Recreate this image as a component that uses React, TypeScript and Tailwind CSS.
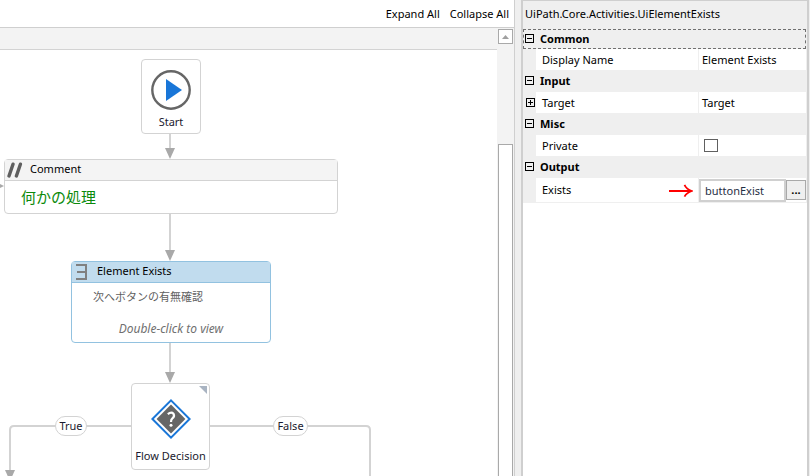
import { useState } from "react";
import type { ReactNode } from "react";

const arrowHeads = [
    { x: 170, y: 98 },
    { x: 170, y: 200 },
    { x: 170, y: 322 },
    { x: 10, y: 420 },
];

function Connectors() {
    return (
        <svg className="absolute left-0 top-0" width="497" height="600" aria-hidden="true">
            <g fill="none" stroke="#d3d3d3" strokeWidth="2">
                <path d="M170 84V100M170 164V202M170 293V324" />
                <path d="M131 376H14Q10 376 10 380V422" />
                <path d="M210 376H366Q370 376 370 380V600" />
                <path d="M0 136H1" />
            </g>
            {arrowHeads.map(({ x, y }) => (
                <path key={`${x}-${y}`} d={`M${x - 5} ${y}h10l-5 11z`} fill="#a9a9a9" />
            ))}
            <path d="M0 134l4 2l-4 2z" fill="#a9a9a9" />
        </svg>
    );
}

function FlowCanvas() {
    return (
        <div className="relative min-w-0 flex-1 overflow-hidden bg-white">
            <Connectors />

            {/* Start */}
            <div className="absolute left-[141px] top-[9px] flex h-[75px] w-[60px] flex-col items-center rounded border border-[#d3d3d3] bg-white pt-2.5">
                <svg width="40" height="40" viewBox="0 0 40 40" aria-hidden="true">
                    <circle cx="20" cy="20" r="18.7" fill="#fff" stroke="#666" strokeWidth="2.4" />
                    <path d="M15 9L31 20L15 31z" fill="#1976d8" />
                </svg>
                <span className="mt-1 leading-4 text-[#1a1a2e]">Start</span>
            </div>

            {/* Comment */}
            <div className="absolute left-1 top-[109px] h-[55px] w-[334px] rounded-sm border border-[#d3d3d3] bg-white">
                <div className="flex h-[21px] items-start border-b border-[#d3d3d3] bg-[#f4f4f4] pl-0.5 pt-px">
                    <svg className="mt-px" width="16" height="16" viewBox="0 0 16 16" aria-hidden="true">
                        <path d="M6 2.2L2 14M13.4 2.2L9.4 14" stroke="#5f5f5f" strokeWidth="3.4" strokeLinecap="round" />
                    </svg>
                    <span className="ml-[7px] leading-4">Comment</span>
                </div>
                <p className="pl-4 pt-1 text-[15px] leading-6 text-[#0b8a0b]">何かの処理</p>
            </div>

            {/* Element Exists */}
            <div className="absolute left-[71px] top-[211px] h-[82px] w-[200px] rounded-sm border border-[#92c2e0] bg-white">
                <div className="flex h-[21px] items-start border-b border-[#92c2e0] bg-[#c1dcee] pl-1 pt-px">
                    <svg width="13" height="17" viewBox="0 0 13 17" fill="none" stroke="#808080" strokeWidth="2" aria-hidden="true">
                        <path d="M0 2H10V16H0M1 9H10" />
                    </svg>
                    <span className="ml-2 leading-4">Element Exists</span>
                </div>
                <p className="pl-[21px] pt-1.5 leading-4 text-[#5f5f5f]">次へボタンの有無確認</p>
                <p className="mt-4 text-center text-xs italic leading-4 text-[#707070]">Double-click to view</p>
            </div>

            {/* Flow Decision */}
            <div className="absolute left-[131px] top-[333px] flex h-[87px] w-[79px] flex-col items-center rounded border border-[#d3d3d3] bg-white pt-[15px]">
                <svg className="absolute right-0.5 top-0.5" width="8" height="8" aria-hidden="true">
                    <path d="M0 0H8V8z" fill="#a9b4c2" />
                </svg>
                <svg width="40" height="40" viewBox="0 0 40 40" aria-hidden="true">
                    <path d="M20 1.4L38.6 20L20 38.6L1.4 20z" fill="#fff" stroke="#1976d8" strokeWidth="2" />
                    <path d="M20 5.6L34.4 20L20 34.4L5.6 20z" fill="#666" />
                    <path d="M16.8 15.2Q20.3 12.4 22.5 14.7Q24 17.5 21.4 19.3Q20 20.4 20 23" fill="none" stroke="#fff" strokeWidth="2.2" />
                    <circle cx="20" cy="26.2" r="1.5" fill="#fff" />
                </svg>
                <span className="mt-[9px] whitespace-nowrap leading-4 text-[#1a1a2e]">Flow Decision</span>
            </div>

            <span className="absolute left-[55px] top-[366px] flex h-5 w-8 items-center justify-center rounded-full border border-[#d3d3d3] bg-white text-[#1a1a2e]">
                True
            </span>
            <span className="absolute left-[273px] top-[366px] flex h-5 w-[35px] items-center justify-center rounded-full border border-[#d3d3d3] bg-white text-[#1a1a2e]">
                False
            </span>
        </div>
    );
}

function Designer() {
    return (
        <main className="flex min-w-0 flex-1 flex-col border-r border-[#cfcfcf] bg-white">
            <div className="flex h-7 shrink-0 items-center justify-end gap-2.5 border-b border-[#cfcfcf] pr-[5px]">
                <button type="button">Expand All</button>
                <button type="button">Collapse All</button>
            </div>
            <div className="flex min-h-0 flex-1">
                <div className="flex min-w-0 flex-1 flex-col">
                    <div className="h-[22px] shrink-0 border-b border-[#d3d3d3] bg-[#f3f3f3]" />
                    <FlowCanvas />
                </div>
                <div className="flex w-[17px] shrink-0 flex-col bg-[#f3f3f3] px-px pt-px">
                    <button
                        type="button"
                        aria-label="Scroll up"
                        className="flex h-[15px] shrink-0 items-center justify-center border border-[#a9a9a9] bg-white"
                    >
                        <svg width="7" height="4" aria-hidden="true">
                            <path d="M0 4L3.5 0L7 4z" fill="#a0a0a0" />
                        </svg>
                    </button>
                    <div className="mt-[100px] flex-1 border border-b-0 border-[#a9a9a9] bg-white" />
                </div>
            </div>
        </main>
    );
}

function Expander({ label, open, onToggle }: { label: string; open: boolean; onToggle: () => void }) {
    return (
        <button type="button" aria-label={`Toggle ${label}`} aria-expanded={open} onClick={onToggle} className="pb-px">
            <svg width="9" height="9" fill="none" stroke="#000" shapeRendering="crispEdges" aria-hidden="true">
                <path d="M.5 .5H8.5V8.5H.5zM2 4.5H7" />
                {!open && <path d="M4.5 2V7" />}
            </svg>
        </button>
    );
}

function Group({ title, focused = false, children }: { title: string; focused?: boolean; children: ReactNode }) {
    const [open, setOpen] = useState(true);

    return (
        <section>
            <h2
                className={
                    focused
                        ? "flex h-5 items-center gap-1.5 border border-dashed border-[#707070] pl-px font-bold"
                        : "flex h-[22px] items-center gap-1.5 pl-0.5 font-bold"
                }
            >
                <Expander label={title} open={open} onToggle={() => setOpen(!open)} />
                {title}
            </h2>
            {open && children}
        </section>
    );
}

function ExistsArrow() {
    return (
        <svg className="mr-[5px]" width="24" height="13" fill="none" stroke="#f00" strokeWidth="1.8" aria-hidden="true">
            <path d="M0 7H22M15.5 .8Q17.5 5.2 22.8 7Q17.5 8.8 15.5 12.6" />
        </svg>
    );
}

export default function App() {
    const [displayName, setDisplayName] = useState("Element Exists");
    const [targetOpen, setTargetOpen] = useState(false);
    const [isPrivate, setIsPrivate] = useState(false);
    const [exists, setExists] = useState("buttonExist");

    return (
        <div className="flex h-screen overflow-hidden bg-[#efefef] font-['Noto_Sans','Noto_Sans_CJK_JP',sans-serif] text-[11px] leading-4 text-black">
            <Designer />

            <aside className="ml-1.5 mr-px flex w-[288px] shrink-0 flex-col border-x-2 border-t border-[#cfcfcf] bg-white">
                <div className="bg-[#efefef] pr-px">
                    <h1 className="h-7 pl-0.5 pt-[5px]">UiPath.Core.Activities.UiElementExists</h1>

                    <Group title="Common" focused>
                        <div className="flex h-[21px] pl-[13px]">
                            <label htmlFor="display-name" className="flex flex-1 items-center bg-white pl-1.5">
                                Display Name
                            </label>
                            <input
                                id="display-name"
                                value={displayName}
                                onChange={(e) => setDisplayName(e.target.value)}
                                className="ml-px w-[107px] bg-white pl-[3px] outline-none"
                            />
                        </div>
                    </Group>

                    <Group title="Input">
                        <div className="flex h-[21px]">
                            <div className="flex w-[13px] items-start justify-end pr-px pt-1.5">
                                <Expander label="Target" open={targetOpen} onToggle={() => setTargetOpen(!targetOpen)} />
                            </div>
                            <span className="flex flex-1 items-center bg-white pl-1.5">Target</span>
                            <span className="ml-px flex w-[107px] items-center bg-white pl-[3px]">Target</span>
                        </div>
                    </Group>

                    <Group title="Misc">
                        <div className="flex h-[21px] pl-[13px]">
                            <label htmlFor="private" className="flex flex-1 items-center bg-white pl-1.5">
                                Private
                            </label>
                            <div className="ml-px flex w-[107px] items-center bg-white pl-[5px]">
                                <input
                                    id="private"
                                    type="checkbox"
                                    checked={isPrivate}
                                    onChange={(e) => setIsPrivate(e.target.checked)}
                                    className="h-[13px] w-3.5 appearance-none border border-[#606060] bg-white checked:bg-[#606060]"
                                />
                            </div>
                        </div>
                    </Group>

                    <Group title="Output">
                        <div className="flex h-[25px] border-b border-[#efefef] pl-[13px]">
                            <div className="flex flex-1 items-center justify-between bg-white pl-1.5">
                                <label htmlFor="exists">Exists</label>
                                <ExistsArrow />
                            </div>
                            <div className="ml-px flex w-[107px] items-center bg-white">
                                <input
                                    id="exists"
                                    value={exists}
                                    onChange={(e) => setExists(e.target.value)}
                                    className="h-[23px] min-w-0 flex-1 border-2 border-[#d0d0d0] bg-white pl-1 text-[#1f2f45] outline-none"
                                />
                                <button
                                    type="button"
                                    aria-label="Open expression editor"
                                    className="flex h-5 w-5 items-center justify-center border border-[#a9a9a9] bg-[#efefef] font-bold"
                                >
                                    ...
                                </button>
                            </div>
                        </div>
                    </Group>
                </div>
            </aside>
        </div>
    );
}
